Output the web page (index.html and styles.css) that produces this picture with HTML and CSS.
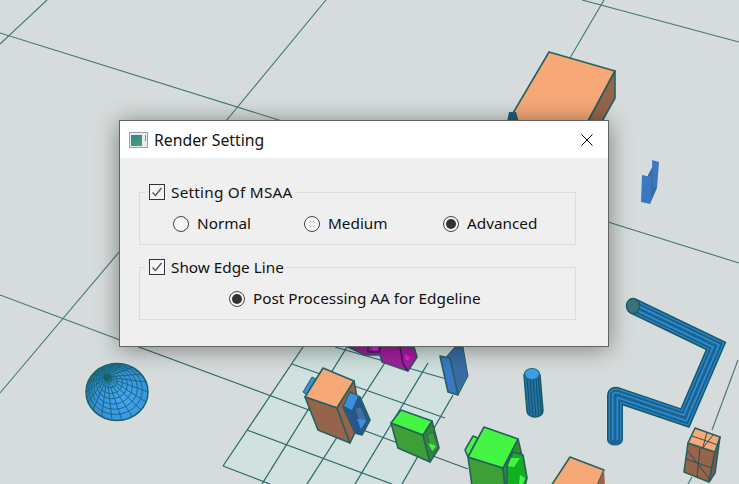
FILE: index.html
```html
<!DOCTYPE html>
<html lang="en">
<head>
<meta charset="utf-8">
<title>Render Setting</title>
<link rel="stylesheet" href="styles.css">
</head>
<body>
<main class="viewport">
  <svg class="scene" viewBox="0 0 739 484" width="739" height="484" aria-hidden="true">
    <defs>
      <radialGradient id="ballFill" cx="0.6" cy="0.62" r="0.65">
        <stop offset="0" stop-color="#44a6f8"/>
        <stop offset="0.7" stop-color="#3592de"/>
        <stop offset="1" stop-color="#1f6f94"/>
      </radialGradient>
    </defs>
    <polygon class="patch" points="223,466 303,347 470,347 453,395 402,484 270,484"/>
    <g class="grid">
      <line x1="0" y1="33" x2="282" y2="121"/>
      <line x1="47" y1="0" x2="0" y2="44"/>
      <line x1="326" y1="0" x2="226" y2="121"/>
      <line x1="582" y1="0" x2="739" y2="42"/>
      <line x1="604" y1="0" x2="570" y2="58"/>
      <line x1="608" y1="222" x2="739" y2="263"/>
      <line x1="0" y1="295" x2="120" y2="340"/>
      <line x1="120" y1="251" x2="0" y2="393"/>
      <line x1="738" y1="360" x2="712" y2="430"/>
      <line x1="692" y1="477" x2="688" y2="484"/>
    </g>
    <g class="grid grid-strong">
      <line x1="120" y1="340" x2="468" y2="469"/>
      <line x1="223" y1="466" x2="303" y2="347"/>
      <line x1="262" y1="484" x2="347" y2="347"/>
      <line x1="307" y1="484" x2="395" y2="347"/>
      <line x1="355" y1="484" x2="428" y2="363"/>
      <line x1="402" y1="484" x2="453" y2="395"/>
      <line x1="223" y1="466" x2="270" y2="484"/>
      <line x1="247" y1="430" x2="392" y2="484"/>
      <line x1="292" y1="364" x2="445" y2="418"/>
      <line x1="335" y1="347" x2="450" y2="380"/>
    </g>

    <!-- large box, top -->
    <polygon class="top-orange edge" points="549,52 615,71 586,125 506,125"/>
    <polygon class="side-brown edge" points="615,71 615,98 600,125 586,125"/>
    <polygon class="tab-dark" points="509,112 516,112 519,122 507,122"/>

    <!-- small I-beam, right -->
    <polygon class="beam-mid" points="648,175 655,162 657,188 650,204"/>
    <polygon class="beam-light" points="652,160 659,162 657,188 653,187"/>
    <polygon class="beam-light" points="642,175 652,177 650,204 641,202"/>

    <!-- sphere -->
    <g>
      <ellipse class="ball" cx="117" cy="392" rx="31" ry="28.500"/>
      <g class="wire-ball">
        <ellipse cx="108.200" cy="378.800" rx="3.700" ry="3.400"/>
        <ellipse cx="109.500" cy="380.800" rx="7.800" ry="7.100"/>
        <ellipse cx="110.800" cy="382.700" rx="11.800" ry="10.800"/>
        <ellipse cx="112" cy="384.500" rx="15.500" ry="14.300"/>
        <ellipse cx="113.200" cy="386.300" rx="19.200" ry="17.700"/>
        <ellipse cx="114.400" cy="388.100" rx="22.900" ry="21.100"/>
        <ellipse cx="115.600" cy="389.900" rx="26.700" ry="24.500"/>
        <path d="M107 377 L148 392 M107 377 L146 402 M107 377 L141 410 M107 377 L132.500 417 M107 377 L122 420 M107 377 L112 420 M107 377 L101.500 417 M107 377 L93 410 M107 377 L88 402 M107 377 L86 392 M107 377 L88 382 M107 377 L93 374 M107 377 L101.500 367 M107 377 L112 364 M107 377 L122 364 M107 377 L132.500 367 M107 377 L141 374 M107 377 L146 382"/>
      </g>
      <circle class="ball-pole" cx="107" cy="377" r="3.500"/>
    </g>

    <!-- magenta shape -->
    <polygon class="side-magenta edge" points="348,347 365,355 380,355 382,362 408,371 417,357 414,347"/>
    <polygon class="bright-magenta" points="372,347 378,347 377,351 372,350"/>
    <polygon class="bright-magenta" points="405,354 410,357 408,361 405,359"/>
    <polyline class="edge-line" points="368,347 368,352 380,352 380,347"/>
    <polyline class="edge-line" points="400,347 403,364 408,371"/>

    <!-- blue I-beam, centre -->
    <polygon class="beam-mid edge-thin" points="447,356 455,347 463,347 468,376 458,395"/>
    <polygon class="beam-light edge" points="440,356 450,358 458,395 448,392"/>

    <!-- orange box with bracket -->
    <polygon class="tab-blue edge-thin" points="303,392 312,377 316,379 307,395"/>
    <polygon class="top-orange edge" points="323,368 354,381 337,408 305,397"/>
    <polygon class="side-brown edge" points="305,397 337,408 350,443 318,430"/>
    <polygon class="side-brown edge" points="354,381 361,420 350,443 337,408"/>
    <polygon class="bracket edge" points="343,407 350,392 360,397 370,420 362,435 355,433"/>
    <polygon class="tab-blue" points="344,406 350,393 358,396 352,410"/>
    <polygon class="bracket-in edge-thin" points="355,408 361,407 367,421 361,430"/>
    <polygon class="tab-blue" points="357,419 366,420 361,429"/>

    <!-- green cube 1 -->
    <polygon class="green-side edge" points="391,423 423,435 430,462 398,448"/>
    <polygon class="green-dark edge" points="432,421 439,448 430,462 423,435"/>
    <polygon class="green-top edge" points="401,410 432,421 423,435 391,423"/>
    <polygon class="green-side edge-thin" points="427,435 433,432 438,447 432,453"/>
    <polygon class="green-top" points="428,443 436,446 432,451"/>

    <!-- green cube 2 -->
    <polygon class="green-top edge" points="473,436 478,438 468,457 465,450"/>
    <polygon class="green-side edge" points="468,457 503,468 505,486 472,486"/>
    <polygon class="green-dark edge" points="518,439 522,456 505,486 503,468"/>
    <polygon class="green-top edge" points="484,427 518,439 503,468 468,457"/>
    <polygon class="green-bright edge" points="513,452 523,455 527,478 525,486 507,486 507,465"/>
    <polygon class="green-top" points="511,458 520,458 514,467 508,466"/>
    <polygon class="green-top" points="520,475 525,478 523,484 519,484"/>

    <!-- orange box, bottom -->
    <polygon class="top-orange edge" points="570,457 604,470 597,486 551,486"/>
    <polygon class="side-brown" points="604,470 605,486 597,486"/>

    <!-- cylinder -->
    <path class="tube-body" d="M524 375 L527 411 A8 6 0 0 0 543 411 L540 375 Z"/>
    <g class="tube-lines">
      <line x1="527" y1="378" x2="530" y2="414"/>
      <line x1="530" y1="379" x2="533" y2="416"/>
      <line x1="533" y1="380" x2="536" y2="417"/>
      <line x1="536" y1="379" x2="539" y2="416"/>
      <line x1="538.500" y1="378" x2="541.500" y2="414"/>
    </g>
    <ellipse class="tube-cap" cx="532" cy="374" rx="7.500" ry="5.500"/>

    <!-- bent tube -->
    <ellipse class="pipe-end" cx="615" cy="440" rx="8" ry="5.500"/>
    <g class="pipe">
      <path class="pipe-a" d="M615 440 L615 396 Q615 394 617 395 L685 418 L716 346 L633 306"/>
      <path class="pipe-b" d="M615 440 L615 396 Q615 394 617 395 L685 418 L716 346 L633 306"/>
      <path class="pipe-c" d="M615 440 L615 396 Q615 394 617 395 L685 418 L716 346 L633 306"/>
      <path class="pipe-d" d="M615 440 L615 396 Q615 394 617 395 L685 418 L716 346 L633 306"/>
      <path class="pipe-e" d="M615 440 L615 396 Q615 394 617 395 L685 418 L716 346 L633 306"/>
    </g>
    <ellipse class="pipe-cap" cx="633" cy="306" rx="6.500" ry="7.500"/>

    <!-- small wire box -->
    <polygon class="side-brown edge" points="688,443 715,452 709,482 684,472"/>
    <polygon class="side-dark edge" points="720,437 715,473 709,482 715,452"/>
    <polygon class="top-orange edge" points="695,428 720,437 715,452 688,443"/>
    <g class="wire-box">
      <line x1="707" y1="432" x2="703" y2="447"/>
      <line x1="692" y1="436" x2="718" y2="445"/>
      <line x1="713" y1="435" x2="702" y2="449"/>
      <line x1="688" y1="451" x2="711" y2="481"/>
      <line x1="686" y1="459" x2="712" y2="468"/>
      <line x1="700" y1="448" x2="697" y2="477"/>
    </g>
  </svg>

  <section class="dialog">
    <header class="titlebar">
      <svg class="app-icon" viewBox="0 0 19 16" width="19" height="16" aria-hidden="true">
        <defs>
          <linearGradient id="iconFill" x1="0" y1="0" x2="0.6" y2="1">
            <stop offset="0" stop-color="#2f7f9c"/>
            <stop offset="1" stop-color="#4d9f6a"/>
          </linearGradient>
        </defs>
        <rect class="icon-frame" x="0.500" y="0.500" width="18" height="15"/>
        <rect x="2" y="3" width="11" height="11" fill="url(#iconFill)"/>
        <rect class="icon-blue" x="16" y="3" width="1" height="6"/>
      </svg>
      <h1 class="title">Render Setting</h1>
      <svg class="close" viewBox="0 0 12 12" width="12" height="12" aria-hidden="true">
        <path class="close-x" d="M0.500 0.500 L11.500 11.500 M11.500 0.500 L0.500 11.500"/>
      </svg>
    </header>
    <div class="body">
      <div class="group">
        <div class="legend">
          <span class="check"><svg viewBox="0 0 14 14" width="14" height="14" aria-hidden="true"><path class="tick" d="M2.500 7.500 L5.500 10.500 L11.500 3"/></svg></span>
          <span class="label label-wide">Setting Of MSAA</span>
        </div>
        <div class="options options-three">
          <div class="option"><span class="radio"></span><span class="label">Normal</span></div>
          <div class="option"><span class="radio"></span><span class="label">Medium</span></div>
          <div class="option"><span class="radio radio-on"></span><span class="label">Advanced</span></div>
        </div>
      </div>
      <div class="group">
        <div class="legend">
          <span class="check"><svg viewBox="0 0 14 14" width="14" height="14" aria-hidden="true"><path class="tick" d="M2.500 7.500 L5.500 10.500 L11.500 3"/></svg></span>
          <span class="label">Show Edge Line</span>
        </div>
        <div class="options options-one">
          <div class="option"><span class="radio radio-on"></span><span class="label">Post Processing AA for Edgeline</span></div>
        </div>
      </div>
    </div>
  </section>
</main>
</body>
</html>
```

FILE: styles.css
```css
* { box-sizing: border-box; }
html, body { margin: 0; padding: 0; }
body { background: #d6dcdb; font-family: "Noto Sans", "Open Sans", sans-serif; color: #111; overflow: hidden; }

.viewport { position: relative; width: 739px; height: 484px; overflow: hidden; background: #d6dcdb; }
.scene { position: absolute; left: 0; top: 0; display: block; }

/* scene */
.patch { fill: #d0e1e0; }
.grid line { stroke: #3f7878; stroke-width: 1.100; }
.grid-strong line { stroke: #2f6a6a; stroke-width: 1.300; }
.edge { stroke: #27605f; stroke-width: 1.600; stroke-linejoin: round; }
.edge-thin { stroke: #27605f; stroke-width: 1; stroke-linejoin: round; }
.edge-line { fill: none; stroke: #4a1a60; stroke-width: 1.500; }
.top-orange { fill: #f6a877; }
.side-brown { fill: #96644a; }
.side-dark { fill: #7a5a48; }
.tab-dark { fill: #1f5f7c; }
.beam-light { fill: #3a78c4; }
.beam-mid { fill: #3a6ca4; }
.ball { fill: url(#ballFill); stroke: #1d6068; stroke-width: 1.500; }
.wire-ball ellipse, .wire-ball path { fill: none; stroke: #17636f; stroke-width: 0.900; }
.ball-pole { fill: #155f6a; }
.side-magenta { fill: #a41fa0; }
.bright-magenta { fill: #f01ce8; }
.tab-blue { fill: #3a90dc; }
.bracket { fill: #27558f; }
.bracket-in { fill: #3e6fa6; }
.green-top { fill: #44f544; }
.green-side { fill: #3da037; }
.green-dark { fill: #2f8a30; }
.green-bright { fill: #10b020; }
.tube-body { fill: #2373a6; stroke: #1a5c66; stroke-width: 1.500; }
.tube-lines line { stroke: #15506a; stroke-width: 1; }
.tube-cap { fill: #3f9fea; stroke: #1f6a78; stroke-width: 1.200; }
.pipe path { fill: none; stroke-linejoin: miter; }
.pipe-a { stroke: #155a6a; stroke-width: 16; }
.pipe-b { stroke: #2a80c4; stroke-width: 13; }
.pipe-c { stroke: #185e84; stroke-width: 10; }
.pipe-d { stroke: #2f8cd2; stroke-width: 6.500; }
.pipe-e { stroke: #1a6490; stroke-width: 3; }
.pipe-cap { fill: #3b7477; stroke: #1c5f66; stroke-width: 1.500; }
.pipe-end { fill: #1c6590; }
.wire-box line { stroke: #27504f; stroke-width: 1; }

/* dialog */
.dialog {
  position: absolute;
  left: 119px;
  top: 120px;
  width: 490px;
  height: 227px;
  display: flex;
  flex-direction: column;
  background: #efefef;
  border: 1px solid #636363;
  box-shadow: 0 2px 22px rgba(0, 0, 0, 0.42);
}
.titlebar {
  flex: none;
  height: 37px;
  display: flex;
  align-items: center;
  padding: 0 15px 0 9px;
  background: #fff;
}
.app-icon { flex: none; margin-right: 6px; }
.icon-frame { fill: #e8ecec; stroke: #9aa2a6; }
.icon-blue { fill: #5a9ac8; }
.title { flex: 1; margin: 0; font-size: 15.800px; font-weight: 400; line-height: 20px; color: #111; }
.close { flex: none; display: block; }
.close-x { fill: none; stroke: #000; stroke-width: 1; }

.body {
  flex: 1;
  display: flex;
  flex-direction: column;
  gap: 22px;
  padding: 34px 32px 0 19px;
}
.group {
  height: 53px;
  border: 1px solid #dcdcdc;
  display: flex;
  flex-direction: column;
  align-items: flex-start;
}
.legend {
  flex: none;
  display: flex;
  align-items: center;
  gap: 6px;
  height: 20px;
  margin: -11px 0 0 5px;
  padding: 0 2px 0 4px;
  background: #efefef;
}
.check {
  flex: none;
  width: 16px;
  height: 16px;
  border: 1px solid #333;
  background: #f4f4f4;
  display: flex;
}
.tick { fill: none; stroke: #555; stroke-width: 1.300; }
.label { font-size: 15.300px; line-height: 20px; white-space: nowrap; }
.label-wide { letter-spacing: 0.25px; }

.options { align-self: stretch; display: flex; align-items: center; height: 20px; margin-top: 12px; }
.options .label { padding-bottom: 2px; }
.options-three { padding-left: 33px; }
.options-three .option:nth-child(1) { width: 131px; }
.options-three .option:nth-child(2) { width: 139px; }
.options-one { padding-left: 89px; }
.option { display: flex; align-items: center; gap: 8px; }
.radio {
  flex: none;
  width: 16px;
  height: 16px;
  border: 1.300px solid #444;
  border-radius: 50%;
  background: #f6f6f6;
  display: flex;
  align-items: center;
  justify-content: center;
}
.radio-on::after {
  content: "";
  width: 10px;
  height: 10px;
  border-radius: 50%;
  background: #333;
}
```
